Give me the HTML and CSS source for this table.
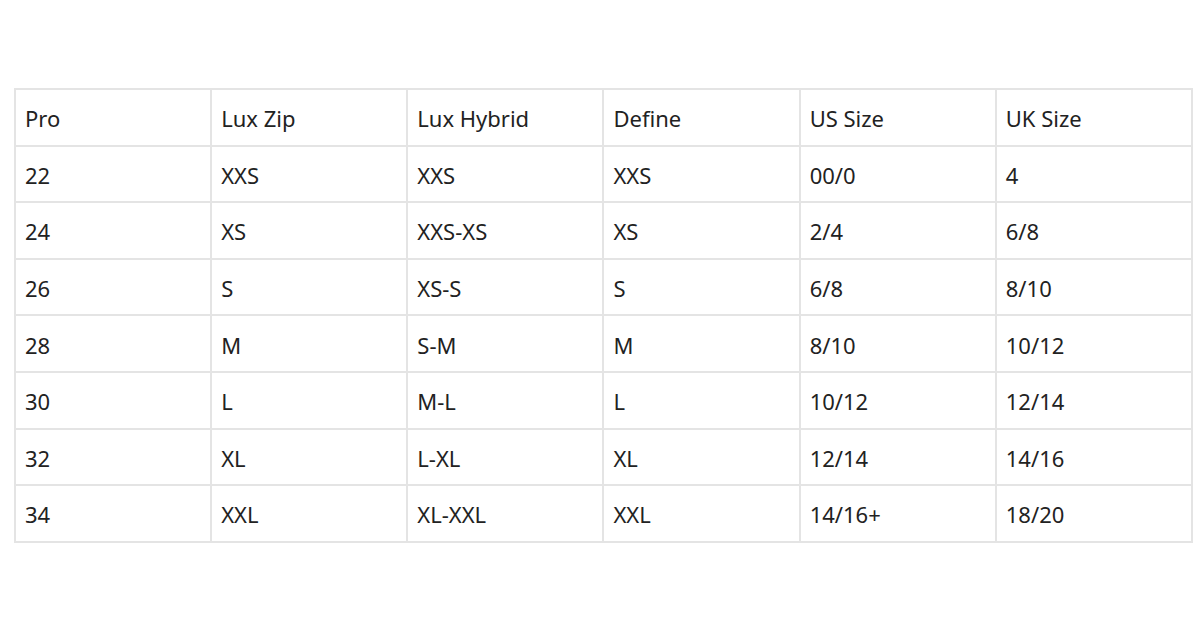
FILE: index.html
```html
<!DOCTYPE html>
<html>
<head>
<meta charset="utf-8">
<link rel="stylesheet" href="styles.css">
</head>
<body>
<div class="page">
<table class="sizes">
<tr><td>Pro</td><td>Lux Zip</td><td>Lux Hybrid</td><td>Define</td><td>US Size</td><td>UK Size</td></tr>
<tr><td>22</td><td>XXS</td><td>XXS</td><td>XXS</td><td>00/0</td><td>4</td></tr>
<tr><td>24</td><td>XS</td><td>XXS-XS</td><td>XS</td><td>2/4</td><td>6/8</td></tr>
<tr><td>26</td><td>S</td><td>XS-S</td><td>S</td><td>6/8</td><td>8/10</td></tr>
<tr><td>28</td><td>M</td><td>S-M</td><td>M</td><td>8/10</td><td>10/12</td></tr>
<tr><td>30</td><td>L</td><td>M-L</td><td>L</td><td>10/12</td><td>12/14</td></tr>
<tr><td>32</td><td>XL</td><td>L-XL</td><td>XL</td><td>12/14</td><td>14/16</td></tr>
<tr><td>34</td><td>XXL</td><td>XL-XXL</td><td>XXL</td><td>14/16+</td><td>18/20</td></tr>
</table>
</div>
</body>
</html>
```

FILE: styles.css
```css
html, body {
  margin: 0;
  padding: 0;
  background: #ffffff;
}
.page {
  width: 1200px;
  height: 628px;
  padding: 88px 0 0 14px;
  box-sizing: border-box;
}
.sizes {
  width: 1179px;
  border-collapse: collapse;
  table-layout: fixed;
  font-family: "Noto Sans", "Open Sans", sans-serif;
  font-size: 22px;
  color: #222222;
}
.sizes tr {
  height: 56.6px;
}
.sizes td {
  border: 2px solid #e4e4e4;
  padding: 2px 0 0 9px;
  vertical-align: middle;
  white-space: nowrap;
  line-height: 24px;
}
```
